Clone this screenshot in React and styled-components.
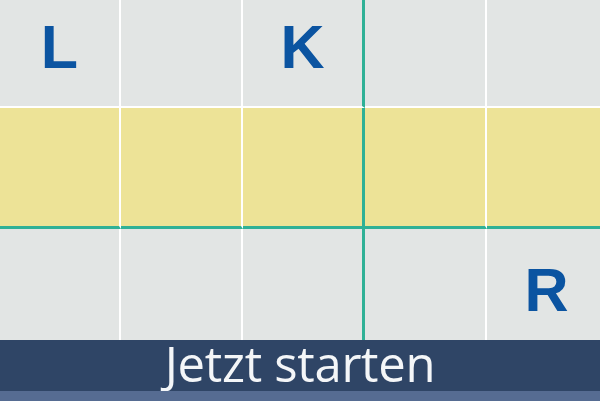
import React from "react";
import styled, { createGlobalStyle } from "styled-components";

const Global = createGlobalStyle`
  html, body { margin: 0; padding: 0; background: #e2e5e4; }
  body { width: 600px; height: 401px; overflow: hidden; }
`;

const Page = styled.div`
  width: 600px;
  height: 401px;
  display: flex;
  flex-direction: column;
`;

const Board = styled.div`
  display: grid;
  grid-template-columns: 121px 122px 122px 122px 113px;
  grid-template-rows: 108px 121px 111px;
`;

const Cell = styled.div`
  box-sizing: border-box;
  background: ${(p) => (p.$yellow ? "#ede397" : "#e2e5e4")};
  border-right: ${(p) => p.$right || "none"};
  border-bottom: ${(p) => p.$bottom || "none"};
  display: flex;
  justify-content: center;
  align-items: flex-start;
  padding-top: ${(p) => p.$top || 0}px;
  padding-left: ${(p) => p.$shift || 0}px;
`;

const Letter = styled.span`
  font-family: "Liberation Sans", Arial, sans-serif;
  font-weight: 700;
  font-size: 61px;
  line-height: 61px;
  color: #0b54a1;
`;

const StartBar = styled.div`
  height: 51px;
  background: #2f4566;
  display: flex;
  justify-content: center;
  align-items: flex-start;
`;

const StartText = styled.span`
  font-family: "Open Sans", "Noto Sans", sans-serif;
  font-size: 49px;
  line-height: 46px;
  color: #f4f6f8;
  letter-spacing: -0.3px;
`;

const Strip = styled.div`
  height: 10px;
  background: #566c92;
`;

const WHITE = "2px solid #ffffff";
const GREEN = "3px solid #2fb196";

const rows = [
  { yellow: false, bottom: WHITE, top: 17, letters: { 0: "L", 2: "K" } },
  { yellow: true, bottom: GREEN, top: 0, letters: {} },
  { yellow: false, bottom: null, top: 31, letters: { 4: "R" } },
];

const rights = [WHITE, WHITE, GREEN, WHITE, null];

export default function App() {
  return (
    <Page>
      <Global />
      <Board>
        {rows.map((row, r) =>
          rights.map((right, c) => (
            <Cell
              key={`${r}-${c}`}
              $yellow={row.yellow}
              $right={right}
              $bottom={row.bottom}
              $top={row.top}
              $shift={c === 4 ? 6 : 0}
            >
              {row.letters[c] && <Letter>{row.letters[c]}</Letter>}
            </Cell>
          ))
        )}
      </Board>
      <StartBar>
        <StartText>Jetzt starten</StartText>
      </StartBar>
      <Strip />
    </Page>
  );
}
